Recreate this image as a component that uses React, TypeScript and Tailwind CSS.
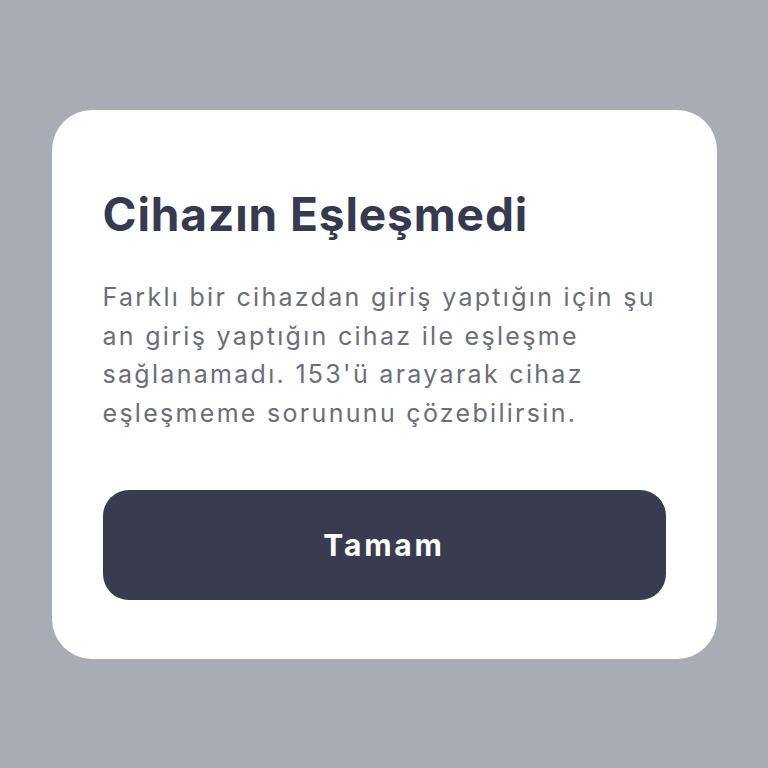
export default function App() {
  return (
    <div className="min-h-screen w-full bg-[#a9acb4] flex items-start justify-center pt-[110px] font-['Inter','Noto_Sans',sans-serif]">
      <div className="w-[665px] h-[549px] bg-white rounded-[40px] px-[51px] pt-[78px] flex flex-col">
        <h1 className="text-[46px] leading-[52px] font-bold text-[#363a50] tracking-[0.9px]">
          Cihazın Eşleşmedi
        </h1>
        <p className="mt-[38px] text-[25px] leading-[38.5px] text-[#6b6d78] whitespace-nowrap tracking-[2.3px]">
          Farklı bir cihazdan giriş yaptığın için şu
          <br />
          an giriş yaptığın cihaz ile eşleşme
          <br />
          sağlanamadı. 153'ü arayarak cihaz
          <br />
          eşleşmeme sorununu çözebilirsin.
        </p>
        <button className="mt-[58px] h-[110px] w-full rounded-[26px] bg-[#393c51] text-white text-[30px] font-bold tracking-[2.8px]">
          Tamam
        </button>
      </div>
    </div>
  );
}
